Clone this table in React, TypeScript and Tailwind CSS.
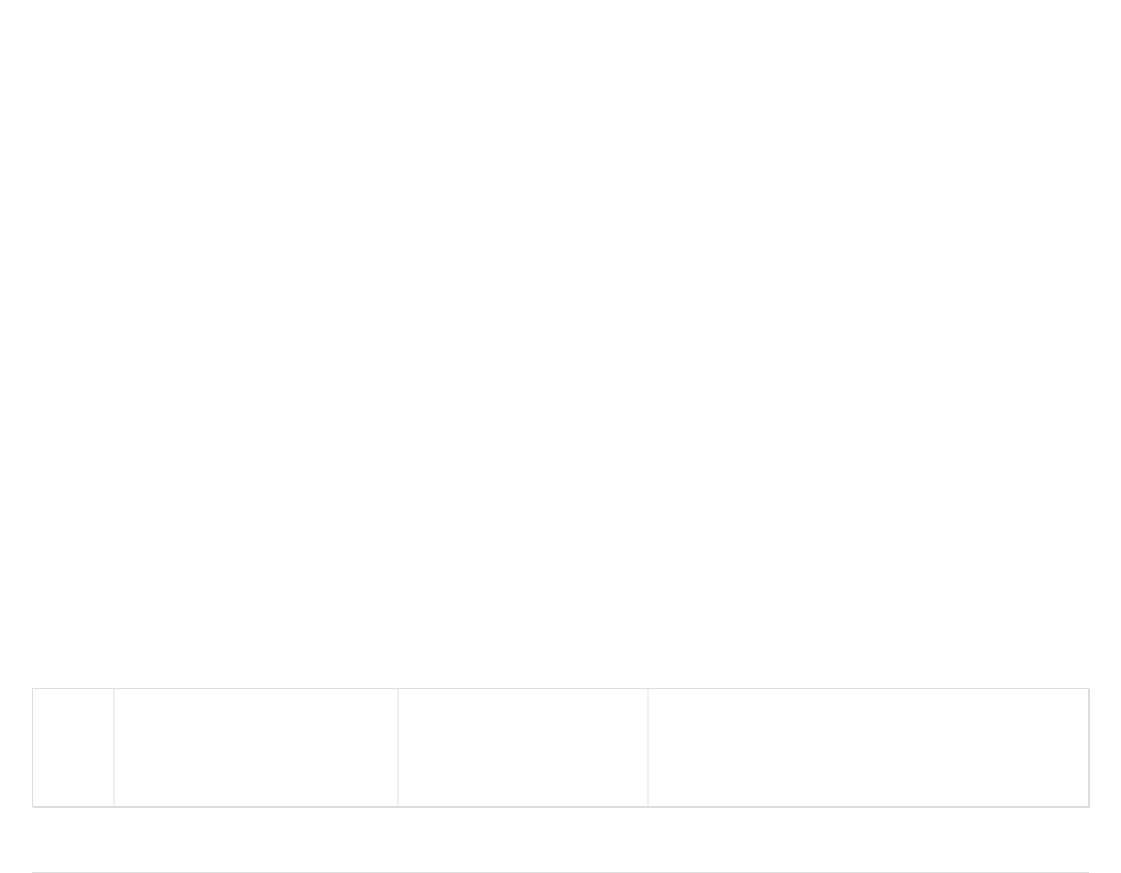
function EmptyTable() {
  return (
    <div className="grid grid-cols-[82px_284px_250px_1fr] h-[119px] border border-[#dedede] shadow-[1px_1px_0_#dcdcdc] bg-white">
      <div className="border-r-2 border-[#f0f0f0]" />
      <div className="border-r-2 border-[#f0f0f0]" />
      <div className="border-r-2 border-[#f0f0f0]" />
      <div />
    </div>
  );
}

export default function App() {
  return (
    <div className="min-h-screen bg-white px-8 pt-8 font-['Liberation_Sans',sans-serif]">
      <div className="h-[656px]" />
      <div className="flex flex-col gap-[65px]">
        <EmptyTable />
        <EmptyTable />
      </div>
    </div>
  );
}
